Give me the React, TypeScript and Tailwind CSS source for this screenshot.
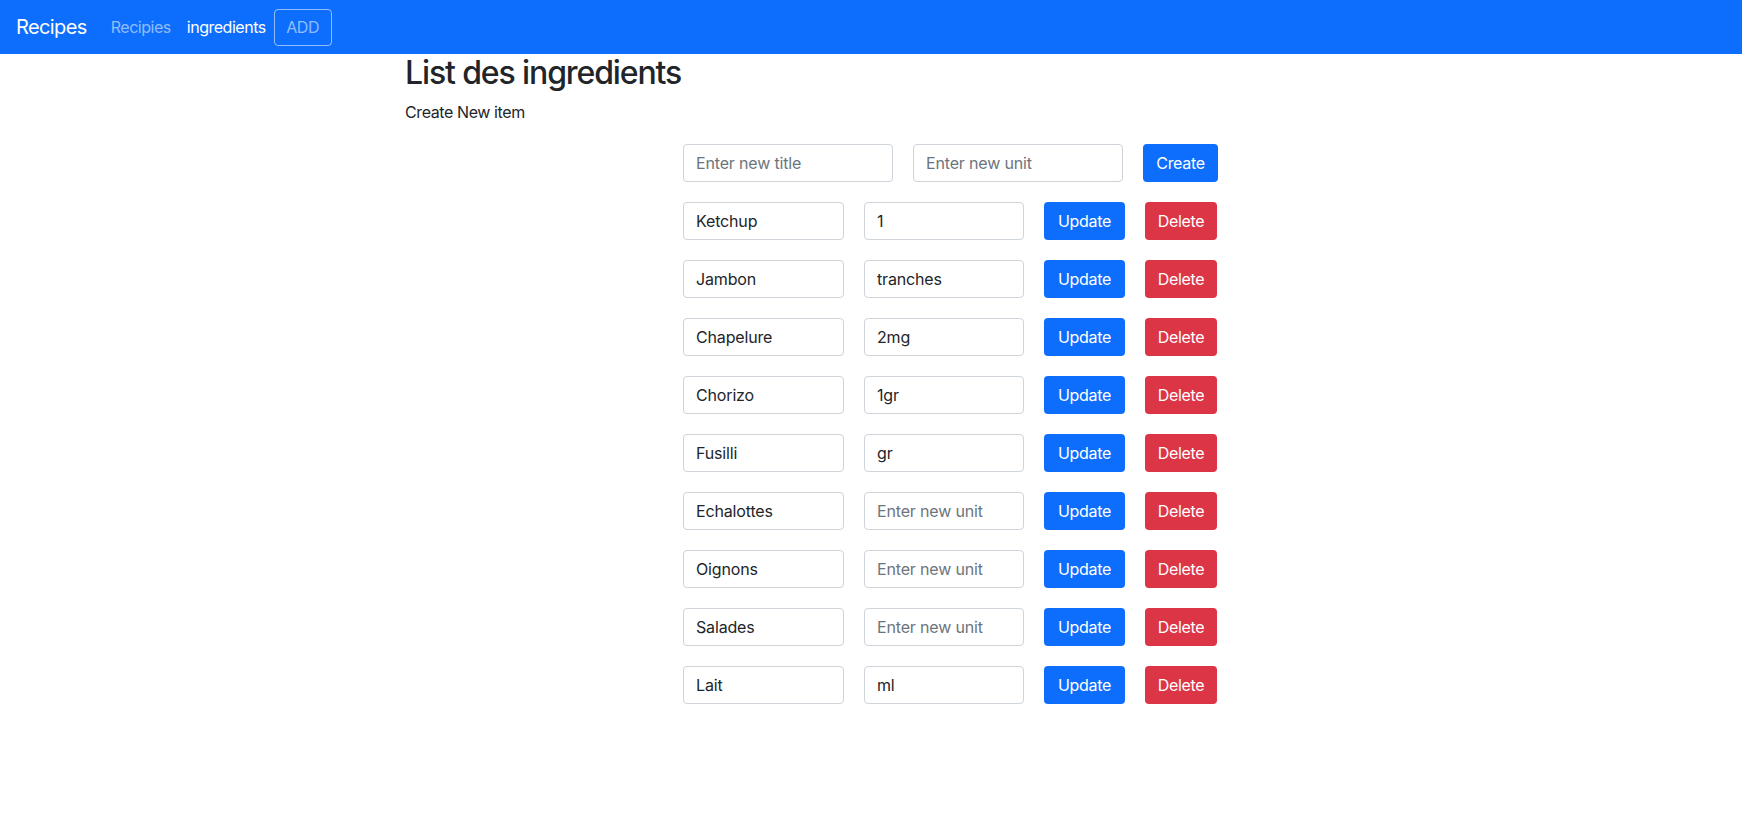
import React from "react";

const rows: { title: string; unit: string }[] = [
  { title: "Ketchup", unit: "1" },
  { title: "Jambon", unit: "tranches" },
  { title: "Chapelure", unit: "2mg" },
  { title: "Chorizo", unit: "1gr" },
  { title: "Fusilli", unit: "gr" },
  { title: "Echalottes", unit: "" },
  { title: "Oignons", unit: "" },
  { title: "Salades", unit: "" },
  { title: "Lait", unit: "ml" },
];

const inputCls =
  "h-[38px] rounded-[4px] border border-[#ced4da] bg-white px-[12px] text-[16px] tracking-[-0.01em] text-[#212529] placeholder:text-[#6c757d] outline-none";

export default function App() {
  return (
    <div
      className="min-h-[816px] bg-white text-[#212529] tracking-[-0.02em]"
      style={{ fontFamily: "Inter, 'Noto Sans', sans-serif" }}
    >
      <nav className="flex h-[54px] items-center bg-[#0d6efd] px-[16px]">
        <span className="mr-[16px] text-[20px] tracking-[-0.03em] text-white">Recipes</span>
        <span className="px-[8px] text-[16px] tracking-[-0.03em] text-[rgba(255,255,255,0.55)]">Recipies</span>
        <span className="px-[8px] text-[16px] tracking-[-0.03em] text-white">ingredients</span>
        <span className="flex h-[37px] w-[58px] items-center justify-center rounded-[4px] border border-[rgba(255,255,255,0.55)] text-[16px] text-[rgba(255,255,255,0.55)]">
          ADD
        </span>
      </nav>
      <div className="pl-[405px]">
        <h2 className="mb-[8px] text-[32px] font-medium leading-[38.4px] tracking-[-0.035em]">
          List des ingredients
        </h2>
        <p className="mb-[20px] text-[16px] leading-[24px] tracking-[-0.025em]">Create New item</p>
        <div className="ml-[278px] flex flex-col gap-[20px]">
          <div className="flex gap-[20px]">
            <input className={`${inputCls} w-[210px]`} placeholder="Enter new title" />
            <input className={`${inputCls} w-[210px]`} placeholder="Enter new unit" />
            <button className="h-[38px] w-[75px] rounded-[4px] bg-[#0d6efd] text-[16px] text-white">
              Create
            </button>
          </div>
          {rows.map((r) => (
            <div key={r.title} className="flex gap-[20px]">
              <input className={`${inputCls} w-[161px]`} defaultValue={r.title} />
              <input
                className={`${inputCls} w-[160px]`}
                defaultValue={r.unit}
                placeholder="Enter new unit"
              />
              <button className="h-[38px] w-[81px] rounded-[4px] bg-[#0d6efd] text-[16px] text-white">
                Update
              </button>
              <button className="h-[38px] w-[72px] rounded-[4px] bg-[#dc3545] text-[16px] text-white">
                Delete
              </button>
            </div>
          ))}
        </div>
      </div>
    </div>
  );
}
